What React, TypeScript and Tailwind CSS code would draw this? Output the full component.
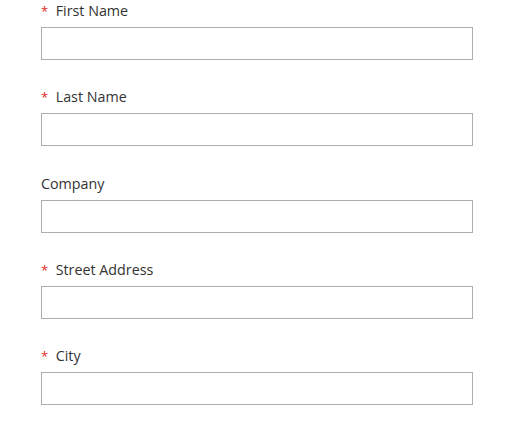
const fields = [
  { label: "First Name", required: true },
  { label: "Last Name", required: true },
  { label: "Company", required: false },
  { label: "Street Address", required: true },
  { label: "City", required: true },
];

export default function App() {
  return (
    <div className="min-h-[422px] bg-white pl-[41px] pt-px font-['Open_Sans',sans-serif] text-[#333]">
      {fields.map((f) => (
        <div key={f.label} className="mb-[27.33px] w-[432px]">
          <label className="flex h-5 items-center text-[14.3px] leading-5">
            {f.required && (
              <span className="mr-[7.5px] text-[13px] text-[#e02b27]">*</span>
            )}
            {f.label}
          </label>
          <input
            type="text"
            className="mt-1.5 block h-[33px] w-full border border-[#adadad] bg-white px-2.5 text-sm outline-none"
          />
        </div>
      ))}
    </div>
  );
}
